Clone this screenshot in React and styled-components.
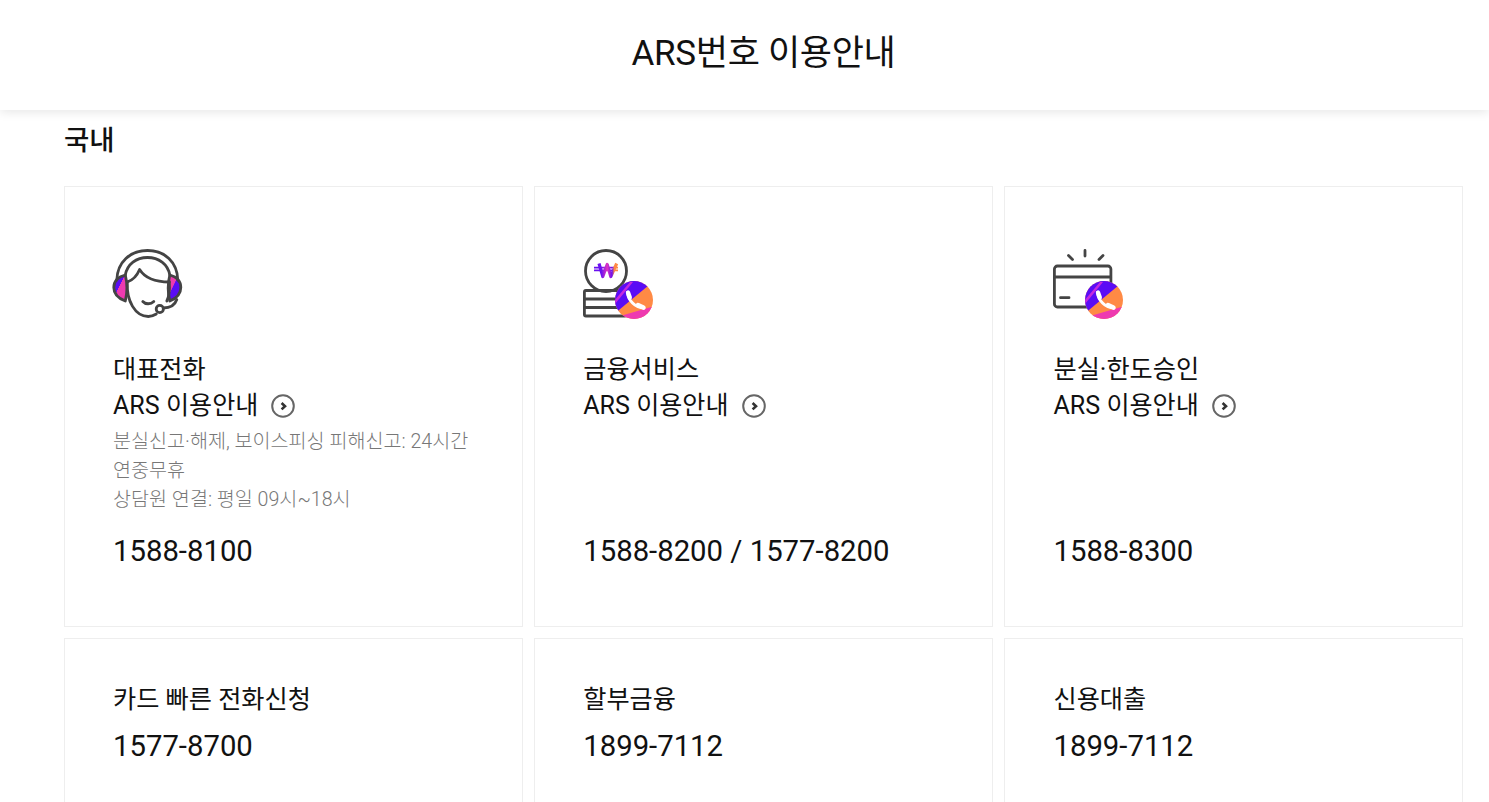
import React from 'react';
import styled, { createGlobalStyle } from 'styled-components';

const GlobalStyle = createGlobalStyle`
  html, body {
    margin: 0;
    padding: 0;
    height: 100%;
    overflow: hidden;
    background: #fff;
    color: #111;
    font-family: Roboto, "Noto Sans CJK KR", sans-serif;
  }
`;

const Header = styled.header`
  height: 110px;
  box-sizing: border-box;
  padding: 0 0 12px 38px;
  display: flex;
  align-items: center;
  justify-content: center;
  background: #fff;
  box-shadow: 0 2px 10px rgba(0, 0, 0, 0.1);
`;

const PageTitle = styled.h1`
  margin: 0;
  font-size: 35px;
  font-weight: 400;
  letter-spacing: -0.3px;
`;

const Section = styled.section`
  padding: 0 26px 0 64px;
`;

const SectionTitle = styled.h2`
  margin: 0;
  height: 76px;
  padding-top: 13px;
  box-sizing: border-box;
  font-size: 27.5px;
  line-height: 36px;
  font-weight: 500;
`;

const Grid = styled.div`
  display: grid;
  grid-template-columns: repeat(3, 459px);
  gap: 11px 11.24px;
`;

const Card = styled.article`
  display: flex;
  flex-direction: column;
  box-sizing: border-box;
  height: ${props => (props.$tall ? '441px' : '240px')};
  padding: ${props => (props.$tall ? '62px' : '43px')} 48px 0;
  border: 1px solid #eee;
`;

const IconBox = styled.div`
  width: 70px;
  height: 70px;
  margin-bottom: 33px;
`;

const CardTitle = styled.div`
  font-size: 25.2px;
  line-height: 36px;
  color: #111;
`;

const GuideLink = styled.a`
  display: flex;
  align-items: center;
  gap: 13px;
  font-size: 25.1px;
  line-height: 36px;
  color: #111;
`;

const Arrow = styled.svg`
  width: 24px;
  height: 24px;
  flex: none;
  margin-top: -1px;
`;

const Desc = styled.p`
  margin: 3px 0 0;
  font-size: 19.6px;
  line-height: 29px;
  font-weight: 300;
  color: #777;
`;

const Number = styled.div`
  margin-top: ${props => (props.$pushed ? 'auto' : '8px')};
  margin-bottom: ${props => (props.$pushed ? '55px' : '0')};
  font-size: 29.3px;
  line-height: 40px;
  color: #111;
`;

const ink = { stroke: '#444', strokeWidth: 2.8, strokeLinecap: 'round', strokeLinejoin: 'round' };

function PhoneBadge({ id }) {
  return (
    <g>
      <clipPath id={`${id}-clip`}>
        <circle cx="51" cy="51" r="19" />
      </clipPath>
      <g clipPath={`url(#${id}-clip)`}>
        <rect x="30" y="30" width="42" height="42" fill="#ff8a45" />
        <polygon points="30,30 72,30 72,31 30,66" fill="#5a0cf5" />
        <polygon points="30,53 47,33 50,33 32,55" fill="#c42adf" />
        <polygon points="30,69 70,57.5 72,72 30,72" fill="#ee3ab0" />
      </g>
      <g stroke="#fff" strokeLinecap="round" fill="none">
        <path d="M44.6 43.5C45 51 52 59 61 59" strokeWidth="3" />
        <path d="M45 43.5L46.8 48.5" strokeWidth="4.4" />
        <path d="M55 56L60.4 58.6" strokeWidth="4.4" />
      </g>
    </g>
  );
}

function HeadsetIcon() {
  return (
    <svg width="70" height="70" viewBox="0.7 0 70 70" fill="none" overflow="visible">
      <defs>
        <linearGradient id="ear" x1="0" y1="0" x2="1" y2="1">
          <stop offset="0.42" stopColor="#5a0cf5" />
          <stop offset="0.44" stopColor="#ee3ab0" />
          <stop offset="0.8" stopColor="#ee3ab0" />
        </linearGradient>
        <linearGradient id="ear-right" x1="0" y1="0" x2="1" y2="1">
          <stop offset="0.4" stopColor="#ee3ab0" />
          <stop offset="0.42" stopColor="#5a0cf5" />
          <stop offset="0.75" stopColor="#5a0cf5" />
          <stop offset="0.77" stopColor="#ff8a45" />
        </linearGradient>
      </defs>
      <path d="M13 26C5 28 1.5 33 1.5 38.5S5 49 13 52C15 44 15 34 13 26z" fill="url(#ear)" {...ink} />
      <path d="M57.5 26C65 28 68.5 33 68.5 38.5S65 49 57.5 52C55.5 44 55.5 34 57.5 26z" fill="url(#ear-right)" {...ink} />
      <g {...ink}>
        <path d="M4.5 31C5 13 18 1.5 35.2 1.5S65 13 65.5 31" />
        <path d="M13 26C15 15 24 8.5 35.2 8.5S55.5 15 57.5 26" />
        <path d="M15 33C21 31 25 26 27.3 20.5C32 28 42 33 57 33" />
        <path d="M15 33C14 52 23 67.5 36 67.5C39 67.5 41.5 66.5 44 65" />
        <path d="M57 33C57.5 40 57 47 54.5 52" />
        <path d="M30.5 52.5C33 55.5 38.5 55.5 41.5 52.5" />
        <circle cx="47.5" cy="60" r="3.6" />
        <path d="M51 59C57 59 62.5 56.5 64.5 50.5" />
      </g>
    </svg>
  );
}

function WonIcon() {
  return (
    <svg width="70" height="70" viewBox="0 0 70 70" fill="none">
      <defs>
        <linearGradient id="won" gradientUnits="userSpaceOnUse" x1="11" y1="0" x2="35" y2="0">
          <stop offset="0.3" stopColor="#6a10f0" />
          <stop offset="0.55" stopColor="#e035c0" />
          <stop offset="0.75" stopColor="#6a10f0" />
          <stop offset="0.85" stopColor="#ff8a45" />
        </linearGradient>
      </defs>
      <g {...ink}>
        <circle cx="23" cy="22" r="20.5" />
        <rect x="1.4" y="41.5" width="42" height="25.5" rx="1.5" />
        <path d="M1.4 50H40M1.4 58.5H36" />
      </g>
      <path d="M16 14.5L19.8 27.5L24.2 15.5L27.8 27.5L33.7 14.5" stroke="url(#won)" strokeWidth="3.2" strokeLinejoin="round" />
      <path d="M11 18.6H35M11 21.4H35" stroke="url(#won)" strokeWidth="1.6" />
      <PhoneBadge id="won-badge" />
    </svg>
  );
}

function CardIcon() {
  return (
    <svg width="70" height="70" viewBox="0 0 70 70" fill="none">
      <g {...ink}>
        <path d="M32 1.5V7M15.5 6.5L19.5 10.5M50 6.5L46 10.5" />
        <rect x="1.4" y="17" width="56.5" height="41" rx="3" />
        <path d="M1.4 28H57.7M7.5 48.7H16" />
      </g>
      <PhoneBadge id="card-badge" />
    </svg>
  );
}

function CircleArrow() {
  return (
    <Arrow viewBox="0 0 24 24" fill="none">
      <circle cx="12" cy="12" r="10.8" stroke="#666" strokeWidth="2" />
      <path d="M10.6 9L14 12.2L10.6 15.4" stroke="#333" strokeWidth="2.6" />
    </Arrow>
  );
}

const mainCards = [
  {
    title: '대표전화',
    icon: <HeadsetIcon />,
    desc: ['분실신고·해제, 보이스피싱 피해신고: 24시간', '연중무휴', '상담원 연결: 평일 09시~18시'],
    number: '1588-8100',
  },
  { title: '금융서비스', icon: <WonIcon />, number: '1588-8200 / 1577-8200' },
  { title: '분실·한도승인', icon: <CardIcon />, number: '1588-8300' },
];

const subCards = [
  { title: '카드 빠른 전화신청', number: '1577-8700' },
  { title: '할부금융', number: '1899-7112' },
  { title: '신용대출', number: '1899-7112' },
];

export default function App() {
  return (
    <>
      <GlobalStyle />
      <Header>
        <PageTitle>ARS번호 이용안내</PageTitle>
      </Header>
      <Section>
        <SectionTitle>국내</SectionTitle>
        <Grid>
          {mainCards.map(card => (
            <Card $tall key={card.title}>
              <IconBox>{card.icon}</IconBox>
              <CardTitle>{card.title}</CardTitle>
              <GuideLink>
                ARS 이용안내
                <CircleArrow />
              </GuideLink>
              {card.desc && (
                <Desc>
                  {card.desc.map(line => (
                    <React.Fragment key={line}>
                      {line}
                      <br />
                    </React.Fragment>
                  ))}
                </Desc>
              )}
              <Number $pushed>{card.number}</Number>
            </Card>
          ))}
          {subCards.map(card => (
            <Card key={card.title}>
              <CardTitle>{card.title}</CardTitle>
              <Number>{card.number}</Number>
            </Card>
          ))}
        </Grid>
      </Section>
    </>
  );
}
